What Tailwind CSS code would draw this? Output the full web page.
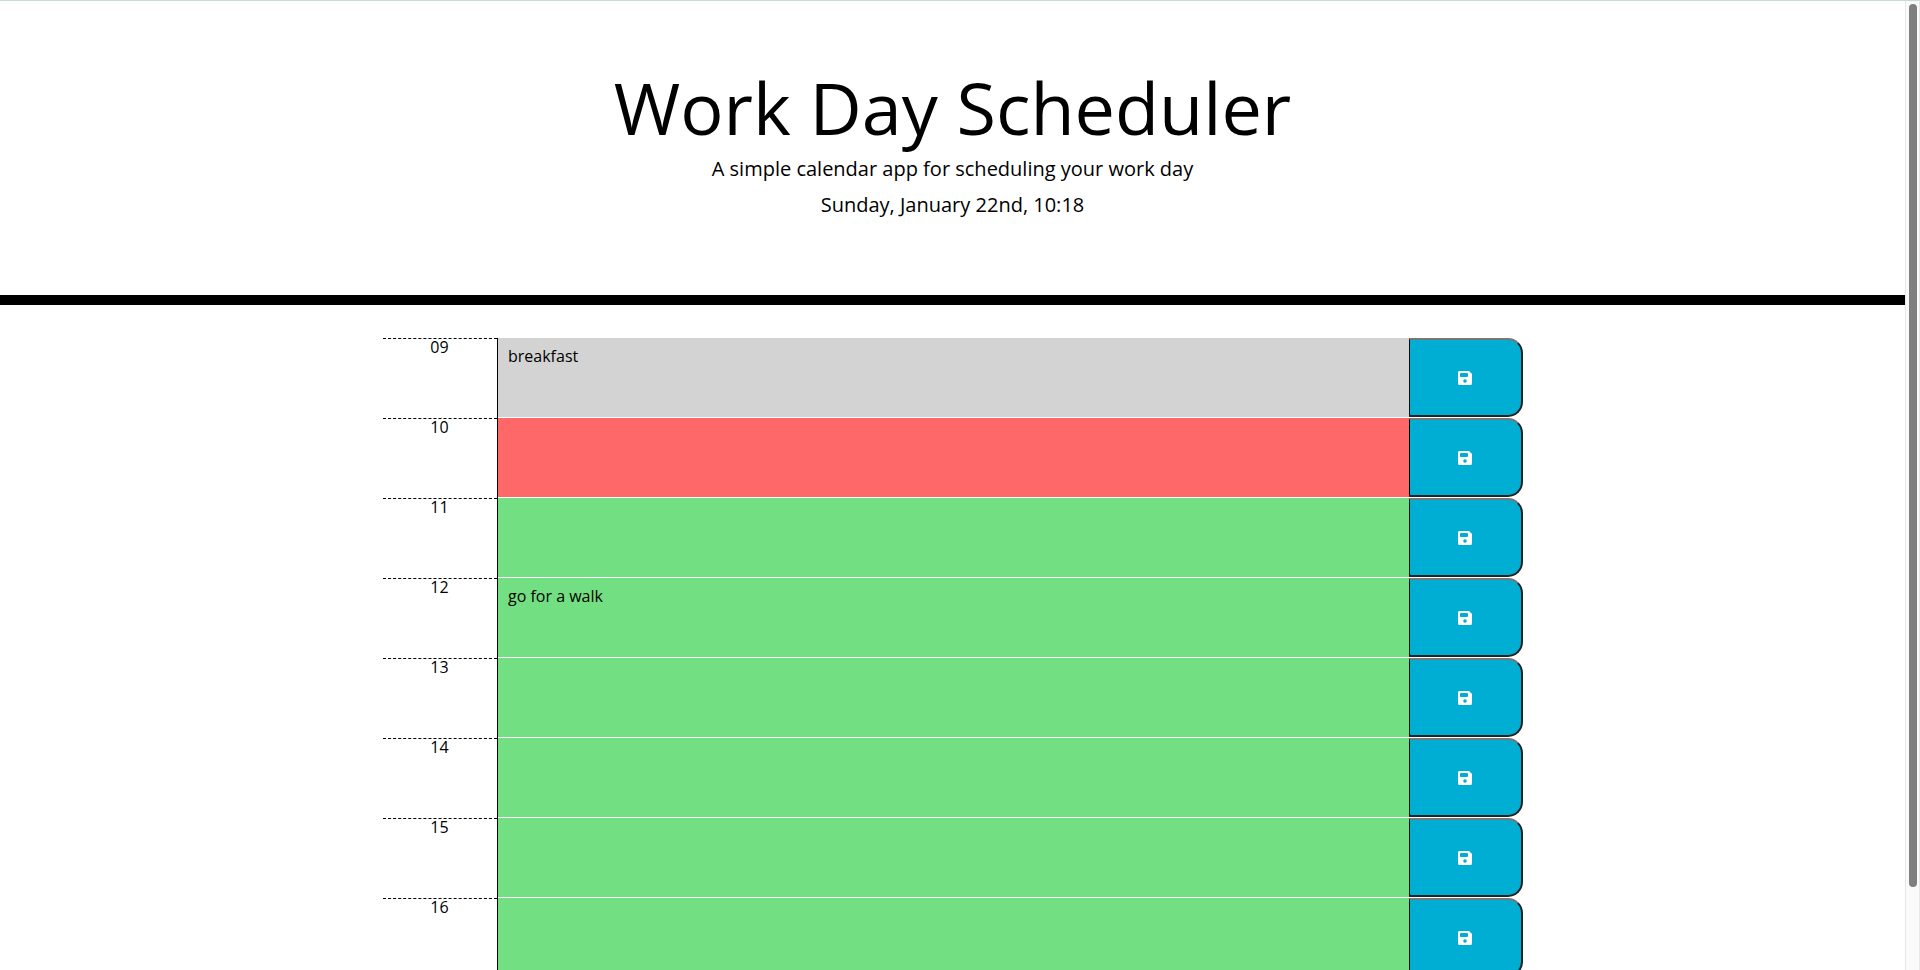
<!DOCTYPE html>
<html lang="en">
<head>
    <meta charset="UTF-8">
    <title>Work Day Scheduler</title>
    <script src="https://cdn.jsdelivr.net/npm/@tailwindcss/browser@4"></script>
</head>
<body class="h-[970px] overflow-hidden bg-white text-black font-['Open_Sans',sans-serif]">
<div class="flex h-[970px] border-t border-[#c5dcd5]">
    <div class="w-[1905px] h-[969px] overflow-hidden">
        <!-- Header -->
        <header class="h-[294px] pt-[62px] text-center">
            <h1 class="text-[72px] leading-[89px] font-normal">Work Day Scheduler</h1>
            <p class="text-[20px] leading-[30px] mt-[2px] font-normal">A simple calendar app for scheduling your work day</p>
            <p class="text-[20px] leading-[30px] mt-[6px] font-normal">Sunday, January 22nd, 10:18</p>
        </header>
        <div class="h-[10px] bg-black"></div>

        <!-- Time blocks -->
        <main class="w-[1140px] ml-[383px] mt-[33px]">
            <div class="flex h-[80px]">
                <div class="w-[114px] border-t border-dashed border-black text-center text-[16px] leading-[16px] pr-[1px]">09</div>
                <div class="flex-1 border-l border-black"><div class="h-[79px] bg-[#d3d3d3] pl-[10px] pr-[9px] pt-[6px] text-[16px] leading-[24px]">breakfast</div></div>
                <button class="w-[114px] mb-[1px] pr-[2px] flex items-center justify-center bg-[#00add3] rounded-r-[15px] border-l border-black border-r-2 border-r-[#222] border-b-2 border-b-[#222] border-t-2 border-t-[#777]">
                    <svg class="w-[14px] h-[14px]" viewBox="0 0 14 14"><path fill="#fff" fill-rule="evenodd" d="M1.5 0H11L14 3V12.5A1.5 1.5 0 0 1 12.5 14H1.5A1.5 1.5 0 0 1 0 12.5V1.5A1.5 1.5 0 0 1 1.5 0ZM3 2A1 1 0 0 0 2 3V5A1 1 0 0 0 3 6H9A1 1 0 0 0 10 5V3A1 1 0 0 0 9 2ZM7 8.2A1.8 1.8 0 1 0 7 11.8A1.8 1.8 0 1 0 7 8.2Z"/></svg>
                </button>
            </div>
            <div class="flex h-[80px]">
                <div class="w-[114px] border-t border-dashed border-black text-center text-[16px] leading-[16px] pr-[1px]">10</div>
                <div class="flex-1 border-l border-black"><div class="h-[79px] bg-[#ff6868] pl-[10px] pr-[9px] pt-[6px] text-[16px] leading-[24px]"></div></div>
                <button class="w-[114px] mb-[1px] pr-[2px] flex items-center justify-center bg-[#00add3] rounded-r-[15px] border-l border-black border-r-2 border-r-[#222] border-b-2 border-b-[#222] border-t-2 border-t-[#777]">
                    <svg class="w-[14px] h-[14px]" viewBox="0 0 14 14"><path fill="#fff" fill-rule="evenodd" d="M1.5 0H11L14 3V12.5A1.5 1.5 0 0 1 12.5 14H1.5A1.5 1.5 0 0 1 0 12.5V1.5A1.5 1.5 0 0 1 1.5 0ZM3 2A1 1 0 0 0 2 3V5A1 1 0 0 0 3 6H9A1 1 0 0 0 10 5V3A1 1 0 0 0 9 2ZM7 8.2A1.8 1.8 0 1 0 7 11.8A1.8 1.8 0 1 0 7 8.2Z"/></svg>
                </button>
            </div>
            <div class="flex h-[80px]">
                <div class="w-[114px] border-t border-dashed border-black text-center text-[16px] leading-[16px] pr-[1px]">11</div>
                <div class="flex-1 border-l border-black"><div class="h-[79px] bg-[#72e082] pl-[10px] pr-[9px] pt-[6px] text-[16px] leading-[24px]"></div></div>
                <button class="w-[114px] mb-[1px] pr-[2px] flex items-center justify-center bg-[#00add3] rounded-r-[15px] border-l border-black border-r-2 border-r-[#222] border-b-2 border-b-[#222] border-t-2 border-t-[#777]">
                    <svg class="w-[14px] h-[14px]" viewBox="0 0 14 14"><path fill="#fff" fill-rule="evenodd" d="M1.5 0H11L14 3V12.5A1.5 1.5 0 0 1 12.5 14H1.5A1.5 1.5 0 0 1 0 12.5V1.5A1.5 1.5 0 0 1 1.5 0ZM3 2A1 1 0 0 0 2 3V5A1 1 0 0 0 3 6H9A1 1 0 0 0 10 5V3A1 1 0 0 0 9 2ZM7 8.2A1.8 1.8 0 1 0 7 11.8A1.8 1.8 0 1 0 7 8.2Z"/></svg>
                </button>
            </div>
            <div class="flex h-[80px]">
                <div class="w-[114px] border-t border-dashed border-black text-center text-[16px] leading-[16px] pr-[1px]">12</div>
                <div class="flex-1 border-l border-black"><div class="h-[79px] bg-[#72e082] pl-[10px] pr-[9px] pt-[6px] text-[16px] leading-[24px]">go for a walk</div></div>
                <button class="w-[114px] mb-[1px] pr-[2px] flex items-center justify-center bg-[#00add3] rounded-r-[15px] border-l border-black border-r-2 border-r-[#222] border-b-2 border-b-[#222] border-t-2 border-t-[#777]">
                    <svg class="w-[14px] h-[14px]" viewBox="0 0 14 14"><path fill="#fff" fill-rule="evenodd" d="M1.5 0H11L14 3V12.5A1.5 1.5 0 0 1 12.5 14H1.5A1.5 1.5 0 0 1 0 12.5V1.5A1.5 1.5 0 0 1 1.5 0ZM3 2A1 1 0 0 0 2 3V5A1 1 0 0 0 3 6H9A1 1 0 0 0 10 5V3A1 1 0 0 0 9 2ZM7 8.2A1.8 1.8 0 1 0 7 11.8A1.8 1.8 0 1 0 7 8.2Z"/></svg>
                </button>
            </div>
            <div class="flex h-[80px]">
                <div class="w-[114px] border-t border-dashed border-black text-center text-[16px] leading-[16px] pr-[1px]">13</div>
                <div class="flex-1 border-l border-black"><div class="h-[79px] bg-[#72e082] pl-[10px] pr-[9px] pt-[6px] text-[16px] leading-[24px]"></div></div>
                <button class="w-[114px] mb-[1px] pr-[2px] flex items-center justify-center bg-[#00add3] rounded-r-[15px] border-l border-black border-r-2 border-r-[#222] border-b-2 border-b-[#222] border-t-2 border-t-[#777]">
                    <svg class="w-[14px] h-[14px]" viewBox="0 0 14 14"><path fill="#fff" fill-rule="evenodd" d="M1.5 0H11L14 3V12.5A1.5 1.5 0 0 1 12.5 14H1.5A1.5 1.5 0 0 1 0 12.5V1.5A1.5 1.5 0 0 1 1.5 0ZM3 2A1 1 0 0 0 2 3V5A1 1 0 0 0 3 6H9A1 1 0 0 0 10 5V3A1 1 0 0 0 9 2ZM7 8.2A1.8 1.8 0 1 0 7 11.8A1.8 1.8 0 1 0 7 8.2Z"/></svg>
                </button>
            </div>
            <div class="flex h-[80px]">
                <div class="w-[114px] border-t border-dashed border-black text-center text-[16px] leading-[16px] pr-[1px]">14</div>
                <div class="flex-1 border-l border-black"><div class="h-[79px] bg-[#72e082] pl-[10px] pr-[9px] pt-[6px] text-[16px] leading-[24px]"></div></div>
                <button class="w-[114px] mb-[1px] pr-[2px] flex items-center justify-center bg-[#00add3] rounded-r-[15px] border-l border-black border-r-2 border-r-[#222] border-b-2 border-b-[#222] border-t-2 border-t-[#777]">
                    <svg class="w-[14px] h-[14px]" viewBox="0 0 14 14"><path fill="#fff" fill-rule="evenodd" d="M1.5 0H11L14 3V12.5A1.5 1.5 0 0 1 12.5 14H1.5A1.5 1.5 0 0 1 0 12.5V1.5A1.5 1.5 0 0 1 1.5 0ZM3 2A1 1 0 0 0 2 3V5A1 1 0 0 0 3 6H9A1 1 0 0 0 10 5V3A1 1 0 0 0 9 2ZM7 8.2A1.8 1.8 0 1 0 7 11.8A1.8 1.8 0 1 0 7 8.2Z"/></svg>
                </button>
            </div>
            <div class="flex h-[80px]">
                <div class="w-[114px] border-t border-dashed border-black text-center text-[16px] leading-[16px] pr-[1px]">15</div>
                <div class="flex-1 border-l border-black"><div class="h-[79px] bg-[#72e082] pl-[10px] pr-[9px] pt-[6px] text-[16px] leading-[24px]"></div></div>
                <button class="w-[114px] mb-[1px] pr-[2px] flex items-center justify-center bg-[#00add3] rounded-r-[15px] border-l border-black border-r-2 border-r-[#222] border-b-2 border-b-[#222] border-t-2 border-t-[#777]">
                    <svg class="w-[14px] h-[14px]" viewBox="0 0 14 14"><path fill="#fff" fill-rule="evenodd" d="M1.5 0H11L14 3V12.5A1.5 1.5 0 0 1 12.5 14H1.5A1.5 1.5 0 0 1 0 12.5V1.5A1.5 1.5 0 0 1 1.5 0ZM3 2A1 1 0 0 0 2 3V5A1 1 0 0 0 3 6H9A1 1 0 0 0 10 5V3A1 1 0 0 0 9 2ZM7 8.2A1.8 1.8 0 1 0 7 11.8A1.8 1.8 0 1 0 7 8.2Z"/></svg>
                </button>
            </div>
            <div class="flex h-[80px]">
                <div class="w-[114px] border-t border-dashed border-black text-center text-[16px] leading-[16px] pr-[1px]">16</div>
                <div class="flex-1 border-l border-black"><div class="h-[79px] bg-[#72e082] pl-[10px] pr-[9px] pt-[6px] text-[16px] leading-[24px]"></div></div>
                <button class="w-[114px] mb-[1px] pr-[2px] flex items-center justify-center bg-[#00add3] rounded-r-[15px] border-l border-black border-r-2 border-r-[#222] border-b-2 border-b-[#222] border-t-2 border-t-[#777]">
                    <svg class="w-[14px] h-[14px]" viewBox="0 0 14 14"><path fill="#fff" fill-rule="evenodd" d="M1.5 0H11L14 3V12.5A1.5 1.5 0 0 1 12.5 14H1.5A1.5 1.5 0 0 1 0 12.5V1.5A1.5 1.5 0 0 1 1.5 0ZM3 2A1 1 0 0 0 2 3V5A1 1 0 0 0 3 6H9A1 1 0 0 0 10 5V3A1 1 0 0 0 9 2ZM7 8.2A1.8 1.8 0 1 0 7 11.8A1.8 1.8 0 1 0 7 8.2Z"/></svg>
                </button>
            </div>
        </main>
    </div>

    <!-- Scrollbar -->
    <aside class="w-[15px] h-[969px] bg-[#fafafa] border-x border-[#e8e8e8] pt-[3px] pl-[3px] pr-[2px]">
        <div class="h-[883px] rounded-full bg-[#7f7f7f]"></div>
    </aside>
</div>
</body>
</html>
